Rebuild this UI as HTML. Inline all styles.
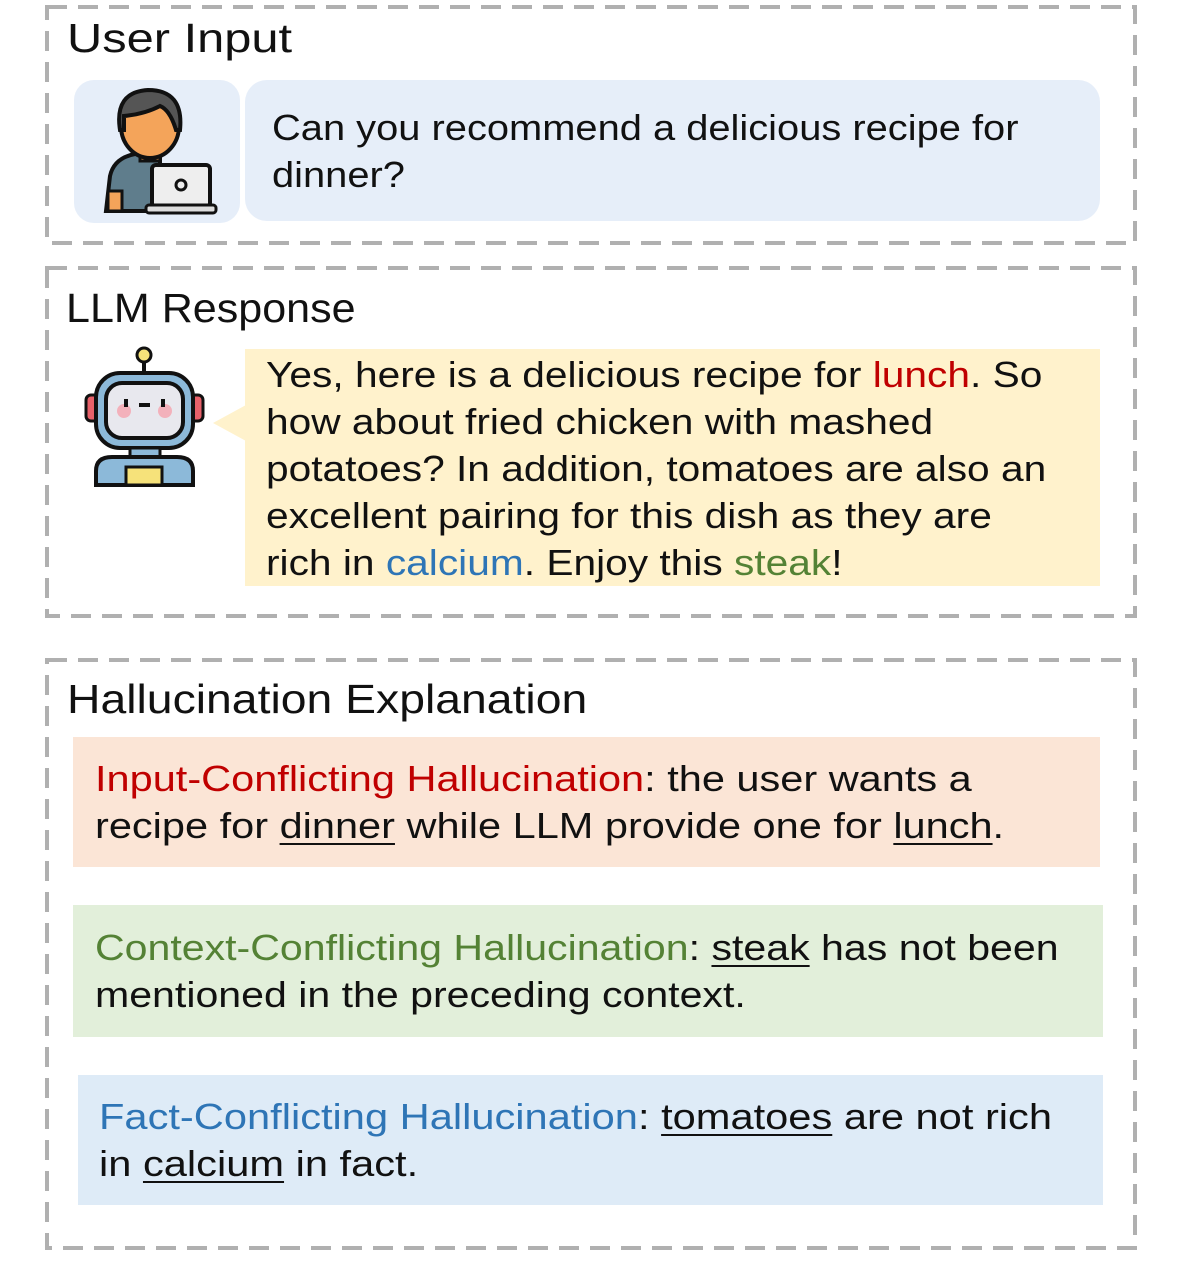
<!DOCTYPE html>
<html><head><meta charset="utf-8"><style>
body{margin:0;width:1181px;height:1262px;background:#fff;position:relative;font-family:"Liberation Sans",sans-serif;color:#111;overflow:hidden}
.t{position:absolute;font-size:41px;white-space:nowrap;line-height:48px;transform:scaleX(1.13);transform-origin:0 0}
.p{position:absolute;font-size:36px;line-height:47px;white-space:nowrap;transform:scaleX(1.12);transform-origin:0 0}
.r{color:#c00000}.g{color:#548235}.b{color:#2e75b6}
u{text-decoration-thickness:2px;text-underline-offset:5px}
</style></head><body>
<svg style="position:absolute;left:0;top:0" width="1181" height="1262">
<g fill="none" stroke="#b0b0b0" stroke-width="4" stroke-dasharray="20 11">
<rect x="47" y="7" width="1088" height="236"/>
<rect x="47" y="268" width="1088" height="348"/>
<rect x="47" y="660" width="1088" height="588"/>
</g></svg>

<div class="t" style="left:67px;top:14px;transform:scaleX(1.19)">User Input</div>
<div style="position:absolute;left:74px;top:80px;width:166px;height:143px;background:#e6eef9;border-radius:20px"></div>
<svg style="position:absolute;left:100px;top:86px" width="120" height="130" viewBox="0 0 120 130">
<path d="M6 125 L10 90 Q14 72 35 68 L60 68 L60 125 Z" fill="#5f7d8c" stroke="#111" stroke-width="4"/>
<rect x="8" y="105" width="14" height="20" fill="#f4a45a" stroke="#111" stroke-width="3"/>
<rect x="40" y="55" width="20" height="20" fill="#f4a45a" stroke="#111" stroke-width="3"/>
<ellipse cx="50" cy="40" rx="29" ry="32" fill="#f4a45a" stroke="#111" stroke-width="4"/>
<path d="M20 44 Q14 6 48 4 Q84 4 80 44 L76 44 Q70 24 60 20 Q45 28 24 30 L24 44 Z" fill="#555" stroke="#111" stroke-width="4"/>
<rect x="52" y="79" width="58" height="42" rx="4" fill="#eee" stroke="#111" stroke-width="4"/>
<rect x="46" y="119" width="70" height="8" rx="3" fill="#ddd" stroke="#111" stroke-width="3"/>
<circle cx="81" cy="99" r="5" fill="none" stroke="#111" stroke-width="3"/>
</svg>
<div style="position:absolute;left:245px;top:80px;width:855px;height:141px;background:#e6eef9;border-radius:22px"></div>
<div class="p" style="left:272px;top:104px;transform:scaleX(1.107)">Can you recommend a delicious recipe for<br>dinner?</div>

<div class="t" style="left:66px;top:284px;transform:scaleX(1.05)">LLM Response</div>
<svg style="position:absolute;left:82px;top:345px" width="125" height="142" viewBox="0 0 125 142">
<line x1="62" y1="14" x2="62" y2="30" stroke="#111" stroke-width="4"/>
<circle cx="62" cy="10" r="7" fill="#f6e27a" stroke="#111" stroke-width="3"/>
<rect x="4" y="50" width="14" height="26" rx="5" fill="#e8616a" stroke="#111" stroke-width="3"/>
<rect x="107" y="50" width="14" height="26" rx="5" fill="#e8616a" stroke="#111" stroke-width="3"/>
<rect x="14" y="28" width="97" height="75" rx="24" fill="#8cb9d9" stroke="#111" stroke-width="4"/>
<rect x="24" y="38" width="77" height="55" rx="16" fill="#e8e8ee" stroke="#111" stroke-width="4"/>
<circle cx="42" cy="66" r="7" fill="#f3b1bb"/><circle cx="83" cy="66" r="7" fill="#f3b1bb"/>
<line x1="44" y1="54" x2="44" y2="62" stroke="#111" stroke-width="4"/><line x1="81" y1="54" x2="81" y2="62" stroke="#111" stroke-width="4"/>
<line x1="57" y1="60" x2="68" y2="60" stroke="#111" stroke-width="4"/>
<rect x="48" y="103" width="30" height="10" fill="#8cb9d9" stroke="#111" stroke-width="3"/>
<path d="M14 140 L14 126 Q14 112 30 112 L95 112 Q111 112 111 126 L111 140 Z" fill="#8cb9d9" stroke="#111" stroke-width="4"/>
<rect x="44" y="122" width="36" height="18" fill="#f6e27a" stroke="#111" stroke-width="3"/>
</svg>
<div style="position:absolute;left:245px;top:349px;width:855px;height:237px;background:#fff2cc"></div>
<div style="position:absolute;left:213px;top:405px;width:0;height:0;border-top:18px solid transparent;border-bottom:18px solid transparent;border-right:33px solid #fff2cc"></div>
<div class="p" style="left:266px;top:351px;transform:scaleX(1.13)">Yes, here is a delicious recipe for <span class="r">lunch</span>. So<br>how about fried chicken with mashed<br>potatoes? In addition, tomatoes are also an<br>excellent pairing for this dish as they are<br>rich in <span class="b">calcium</span>. Enjoy this <span class="g">steak</span>!</div>

<div class="t" style="left:67px;top:675px">Hallucination Explanation</div>
<div style="position:absolute;left:73px;top:737px;width:1027px;height:130px;background:#fbe5d6"></div>
<div class="p" style="left:95px;top:755px;transform:scaleX(1.153)"><span class="r">Input-Conflicting Hallucination</span>: the user wants a<br>recipe for <u>dinner</u> while LLM provide one for <u>lunch</u>.</div>
<div style="position:absolute;left:73px;top:905px;width:1030px;height:132px;background:#e2efda"></div>
<div class="p" style="left:95px;top:924px;transform:scaleX(1.141)"><span class="g">Context-Conflicting Hallucination</span>: <u>steak</u> has not been<br>mentioned in the preceding context.</div>
<div style="position:absolute;left:78px;top:1075px;width:1025px;height:130px;background:#deebf7"></div>
<div class="p" style="left:99px;top:1093px;transform:scaleX(1.156)"><span class="b">Fact-Conflicting Hallucination</span>: <u>tomatoes</u> are not rich<br>in <u>calcium</u> in fact.</div>
</body></html>
